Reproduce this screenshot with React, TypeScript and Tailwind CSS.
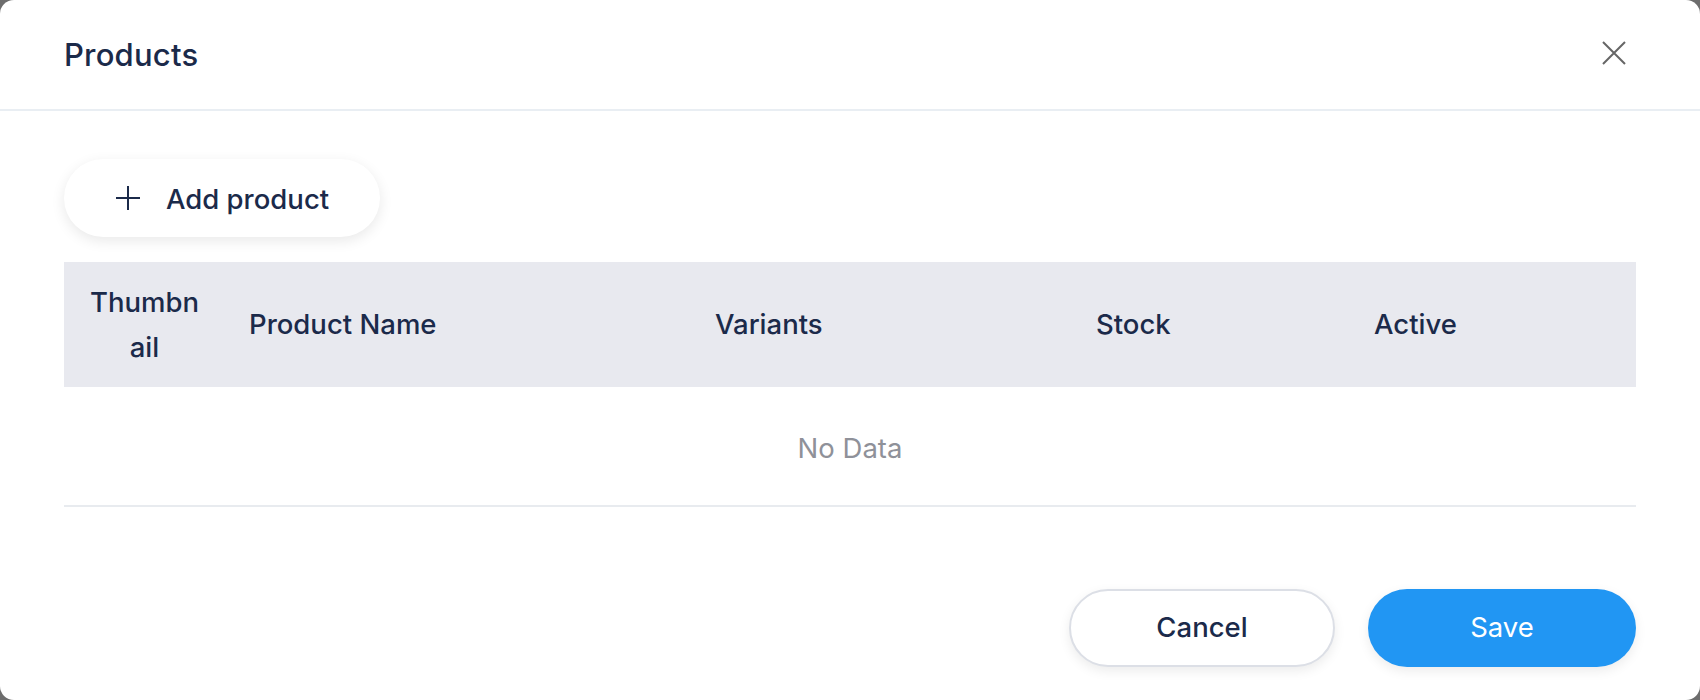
import React from "react";

const columns = [
  { key: "thumbnail", title: "Thumbnail" },
  { key: "name", title: "Product Name" },
  { key: "variants", title: "Variants" },
  { key: "stock", title: "Stock" },
  { key: "active", title: "Active" },
];

const PlusIcon = () => (
  <svg width="26" height="26" viewBox="0 0 26 26" fill="none">
    <path d="M13 1v24M1 13h24" stroke="#1b2a4a" strokeWidth="2" />
  </svg>
);

const CloseIcon = () => (
  <svg width="24" height="24" viewBox="0 0 24 24" fill="none">
    <path d="M1 1l22 22M23 1L1 23" stroke="#666666" strokeWidth="2" />
  </svg>
);

export default function App() {
  return (
    <div
      className="w-[1700px] h-[700px] bg-[#6d6d6d]"
      style={{ fontFamily: 'Inter, "Noto Sans", sans-serif' }}>
      <div className="w-full h-full bg-white rounded-[14px] flex flex-col text-[#1b2a4a]">
        {/* header */}
        <div className="h-[111px] shrink-0 px-[64px] flex items-center justify-between border-b-2 border-[#e9eef3]">
          <h1 className="text-[31px] font-medium tracking-[0.2px] mt-[2px]">Products</h1>
          <button className="w-[24px] h-[24px] mr-[10px] mb-[4px] flex items-center justify-center">
            <CloseIcon />
          </button>
        </div>

        {/* body */}
        <div className="px-[64px] pt-[48px] flex flex-col">
          <button className="w-[316px] h-[78px] rounded-full bg-white shadow-[0_4px_14px_rgba(0,0,0,0.09)] flex items-center pl-[51px] gap-[25px] text-[27.5px] font-medium">
            <PlusIcon />
            <span className="mt-[3px]">Add product</span>
          </button>

          <div className="mt-[25px]">
            <div className="grid grid-cols-[161px_466px_381px_278px_1fr] h-[125px] bg-[#e8e9ef] items-center text-[27.5px] font-medium">
              {columns.map((col, i) => (
                <div
                  key={col.key}
                  className={
                    i === 0
                      ? "px-[24px] text-center break-all leading-[45px]"
                      : "pl-[24px] leading-[45px]"
                  }>
                  {col.title}
                </div>
              ))}
            </div>
            <div className="h-[120px] pt-[6px] flex items-center justify-center border-b-2 border-[#e8ebef] text-[27.5px] text-[#8f9199]">
              No Data
            </div>
          </div>

          {/* footer */}
          <div className="mt-[82px] flex justify-end gap-[33px]">
            <button className="w-[266px] h-[78px] rounded-full bg-white border-2 border-[#dcdfe6] shadow-[0_4px_12px_rgba(0,0,0,0.08)] text-[27.5px] font-medium">
              Cancel
            </button>
            <button className="w-[268px] h-[78px] rounded-full bg-[#2196f3] shadow-[0_4px_12px_rgba(0,0,0,0.08)] text-[27.5px] text-white">
              Save
            </button>
          </div>
        </div>
      </div>
    </div>
  );
}
